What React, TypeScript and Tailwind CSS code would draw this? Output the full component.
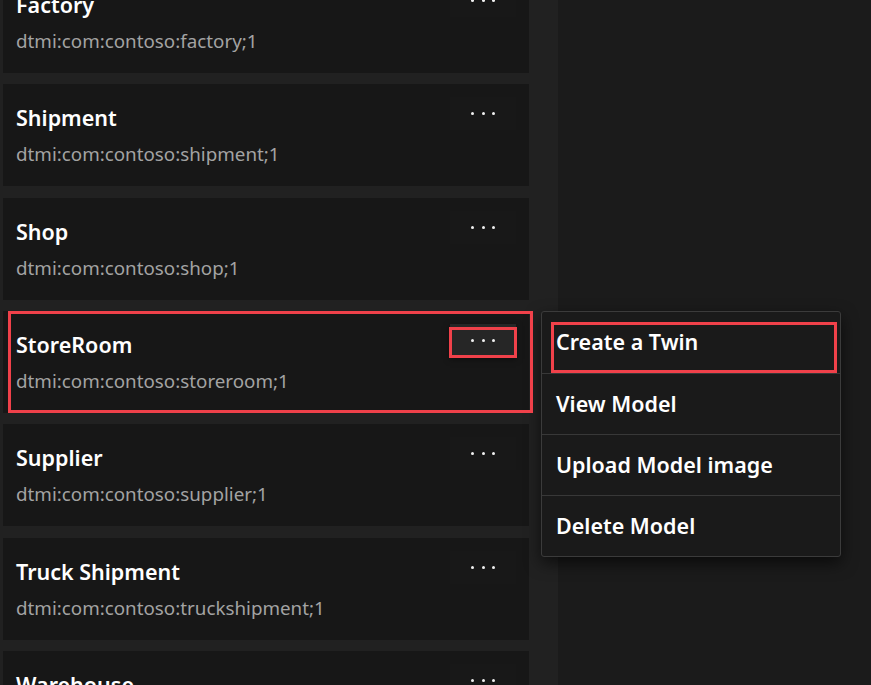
import React from "react";

type Model = { name: string; id: string };

const models: Model[] = [
  { name: "Factory", id: "dtmi:com:contoso:factory;1" },
  { name: "Shipment", id: "dtmi:com:contoso:shipment;1" },
  { name: "Shop", id: "dtmi:com:contoso:shop;1" },
  { name: "StoreRoom", id: "dtmi:com:contoso:storeroom;1" },
  { name: "Supplier", id: "dtmi:com:contoso:supplier;1" },
  { name: "Truck Shipment", id: "dtmi:com:contoso:truckshipment;1" },
  { name: "Warehouse", id: "dtmi:com:contoso:warehouse;1" },
];

const menuItems = ["Create a Twin", "View Model", "Upload Model image", "Delete Model"];

const Dots: React.FC = () => (
  <span className="flex items-center gap-[7.5px]">
    <span className="h-[3px] w-[3px] rounded-full bg-[#f0f0f0]" />
    <span className="h-[3px] w-[3px] rounded-full bg-[#f0f0f0]" />
    <span className="h-[3px] w-[3px] rounded-full bg-[#f0f0f0]" />
  </span>
);

const ModelCard: React.FC<{ model: Model; active?: boolean }> = ({ model, active }) => (
  <div className="relative h-[102px] shrink-0 bg-[#171717] px-[13px]">
    <div className="pt-[20px] text-[21.5px] font-semibold leading-[28px] text-white">{model.name}</div>
    <div className="mt-[10px] text-[18.8px] leading-[24px] text-[#a3a3a3]">{model.id}</div>
    <button
      className={`absolute right-[13px] top-[13px] flex h-[33px] w-[66px] items-center justify-center ${
        active ? "bg-[#262626] shadow-[0_2px_6px_rgba(0,0,0,0.5)]" : "bg-[#181818]"
      }`}
    >
      <Dots />
    </button>
  </div>
);

export default function App() {
  return (
    <div
      className="relative flex h-[685px] w-[871px] overflow-hidden bg-[#1b1b1b]"
      style={{ fontFamily: '"Noto Sans", "Open Sans", sans-serif' }}
    >
      <div className="h-full w-[558px] shrink-0 bg-[#212121] pl-[3px] pr-[29px]">
        <div className="-mt-[29px] flex flex-col gap-[11.33px]">
          {models.map((m) => (
            <ModelCard key={m.name} model={m} active={m.name === "StoreRoom"} />
          ))}
        </div>
      </div>

      {/* context menu */}
      <div className="absolute left-[541px] top-[311px] w-[300px] rounded-[3px] border border-[#3b3b3b] bg-[#1a1a1a] shadow-[0_6px_16px_rgba(0,0,0,0.6)]">
        {menuItems.map((item, i) => (
          <div
            key={item}
            className={`flex h-[61px] items-center px-[14px] text-[21.5px] font-semibold text-white ${
              i > 0 ? "border-t border-[#383838]" : ""
            }`}
          >
            {item}
          </div>
        ))}
      </div>

      {/* annotation boxes */}
      <div className="pointer-events-none absolute left-[8px] top-[311px] h-[102px] w-[525px] border-[3px] border-[#f0414a]" />
      <div className="pointer-events-none absolute left-[449px] top-[327px] h-[31px] w-[68px] border-[3px] border-[#f0414a]" />
      <div className="pointer-events-none absolute left-[551px] top-[322px] h-[51px] w-[286px] border-[3px] border-[#f0414a]" />
    </div>
  );
}
